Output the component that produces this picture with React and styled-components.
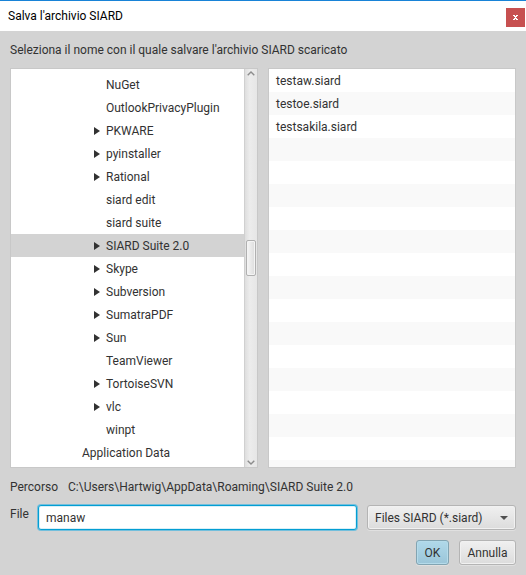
import React, { useState } from "react";
import styled, { createGlobalStyle } from "styled-components";

const GlobalStyle = createGlobalStyle`
  *, *::before, *::after { box-sizing: border-box; }
  body { margin: 0; background: #d3d3d3; }
  body, button, input, select {
    font-family: Roboto, "Open Sans", sans-serif;
    font-size: 12px;
    line-height: 18px;
    color: #323232;
  }
`;

const Dialog = styled.main`
  display: flex;
  flex-direction: column;
  min-height: 100vh;
  border-top: 1px solid #1883d7;
`;

const TitleBar = styled.header`
  display: flex;
  align-items: center;
  justify-content: space-between;
  height: 30px;
  padding: 3px 1px 0 8px;
  background: #fff;
`;

const Title = styled.h1`
  margin: 0;
  padding-bottom: 3px;
  font-size: 12px;
  font-weight: 400;
  color: #000;
`;

const CloseButton = styled.button`
  display: flex;
  align-items: center;
  justify-content: center;
  width: 19px;
  height: 19px;
  padding: 0;
  border: 0;
  background: #c75050;
`;

const Content = styled.form`
  display: flex;
  flex-direction: column;
  gap: 10px;
  padding: 10px;
`;

const Section = styled.section`
  display: flex;
  flex-direction: column;
  gap: 9px;
`;

const Text = styled.p`
  margin: 0;
`;

const Panels = styled.div`
  display: grid;
  grid-template-columns: 1fr 1fr;
  gap: 10px;
`;

const Panel = styled.div`
  display: flex;
  min-width: 0;
  border: 1px solid #c8c8c8;
  background: #fff;
`;

const Tree = styled.ul`
  flex: 1;
  min-width: 0;
  margin: 0;
  padding: 4px 0 3px;
  list-style: none;
`;

const TreeRow = styled.li`
  display: flex;
  align-items: center;
  gap: 6px;
  height: 23px;
  padding-left: ${(p) => (p.$level === 2 ? 83 : 59)}px;
  background: ${(p) => (p.$selected ? "#d3d3d3" : "transparent")};
  white-space: nowrap;
`;

const Disclosure = styled.svg`
  width: 6px;
  height: 8px;
  fill: #323232;
`;

const ScrollBar = styled.div`
  display: flex;
  flex-direction: column;
  align-items: center;
  width: 13px;
  border-left: 1px solid #d0d0d0;
  background: linear-gradient(to right, #dedede, #ececec 40%, #e6e6e6);
`;

const ScrollButton = styled.button`
  display: flex;
  justify-content: center;
  align-items: center;
  width: 12px;
  height: 9px;
  padding: 0;
  border: 0;
  background: transparent;
`;

const ScrollSpace = styled.div`
  flex: ${(p) => p.$part} 0 0;
`;

const Thumb = styled.div`
  width: 10px;
  height: 36px;
  border: 1px solid #b0b0b0;
  border-radius: 2px;
  background: linear-gradient(to right, #f6f6f6, #dcdcdc);
  box-shadow: inset 0 0 0 1px #f4f4f4;
`;

const FileList = styled.ul`
  flex: 1;
  margin: 0;
  padding: 0;
  list-style: none;
  background: repeating-linear-gradient(#fff 0 23px, #f9f9f9 23px 46px);
`;

const FileRow = styled.li`
  display: flex;
  align-items: center;
  height: 23px;
  padding: 0 7px;
`;

const PathRow = styled.div`
  display: flex;
  gap: 10px;
`;

const Fields = styled.div`
  display: flex;
  align-items: stretch;
  gap: 10px;
`;

const FileLabel = styled.label`
  width: 18px;
  white-space: nowrap;
`;

const FileInput = styled.input`
  flex: 1;
  min-width: 0;
  height: 25px;
  padding: 0 7px;
  border: 1px solid #039ed3;
  border-radius: 3px;
  outline: 0;
  background: #fff;
  box-shadow: 0 0 0 1px #73bfdc, inset 0 0 0 1px #d9f0f8;
`;

const Combo = styled.div`
  display: grid;
  align-items: center;
  width: 149px;
`;

const FilterSelect = styled.select`
  grid-area: 1 / 1;
  width: 100%;
  height: 25px;
  padding: 0 24px 0 7px;
  appearance: none;
  border: 1px solid #b4b4b4;
  border-radius: 3px;
  background: linear-gradient(#f0f0f0, #dcdcdc);
  box-shadow: inset 0 0 0 1px #f1f1f1, 0 1px 0 #e0e0e0;
`;

const ComboArrow = styled.svg`
  grid-area: 1 / 1;
  justify-self: end;
  width: 8px;
  height: 4px;
  margin-right: 8px;
  fill: #505050;
  pointer-events: none;
`;

const Actions = styled.footer`
  display: flex;
  justify-content: flex-end;
  gap: 10px;
`;

const ActionButton = styled.button`
  min-width: ${(p) => (p.$primary ? 33 : 57)}px;
  height: 25px;
  padding: 0 7px;
  border: 1px solid ${(p) => (p.$primary ? "#82a4b2" : "#b4b4b4")};
  border-radius: 3px;
  background: ${(p) =>
    p.$primary
      ? "linear-gradient(#b0d9ea, #9bc5d8)"
      : "linear-gradient(#f0f0f0, #dcdcdc)"};
  box-shadow: inset 0 0 0 1px ${(p) => (p.$primary ? "#b5dbea" : "#f1f1f1")},
    0 1px 0 #e0e0e0;
`;

const folders = [
  { name: "NuGet" },
  { name: "OutlookPrivacyPlugin" },
  { name: "PKWARE", parent: true },
  { name: "pyinstaller", parent: true },
  { name: "Rational", parent: true },
  { name: "siard edit" },
  { name: "siard suite" },
  { name: "SIARD Suite 2.0", parent: true, selected: true },
  { name: "Skype", parent: true },
  { name: "Subversion", parent: true },
  { name: "SumatraPDF", parent: true },
  { name: "Sun", parent: true },
  { name: "TeamViewer" },
  { name: "TortoiseSVN", parent: true },
  { name: "vlc", parent: true },
  { name: "winpt" },
  { name: "Application Data", level: 1 },
];

const files = ["testaw.siard", "testoe.siard", "testsakila.siard"];

function Chevron({ up }) {
  return (
    <svg width="8" height="5" viewBox="0 0 8 5" fill="none" stroke="#8c8c8c" strokeWidth="1.4">
      <path d={up ? "M.7 4.2 4 1l3.3 3.2" : "M.7.8 4 4 7.3.8"} />
    </svg>
  );
}

export default function App() {
  const [fileName, setFileName] = useState("manaw");

  return (
    <Dialog>
      <GlobalStyle />
      <TitleBar>
        <Title>Salva l'archivio SIARD</Title>
        <CloseButton type="button" aria-label="Chiudi">
          <svg width="5" height="5" viewBox="0 0 5 5" fill="#fff" shapeRendering="crispEdges">
            <path d="M0 0h2v1h1V0h2v1H4v1H3v1h1v1h1v1H3V4H2v1H0V4h1V3h1V2H1V1H0z" />
          </svg>
        </CloseButton>
      </TitleBar>
      <Content onSubmit={(e) => e.preventDefault()}>
        <Section>
          <Text>Seleziona il nome con il quale salvare l'archivio SIARD scaricato</Text>
          <Panels>
            <Panel>
              <Tree role="tree" aria-label="Cartelle">
                {folders.map((f) => (
                  <TreeRow
                    key={f.name}
                    role="treeitem"
                    aria-selected={Boolean(f.selected)}
                    $level={f.level ?? 2}
                    $selected={f.selected}
                  >
                    <Disclosure viewBox="0 0 6 8" aria-hidden="true">
                      {f.parent && <path d="M0 0 6 4 0 8z" />}
                    </Disclosure>
                    {f.name}
                  </TreeRow>
                ))}
              </Tree>
              <ScrollBar>
                <ScrollButton type="button" aria-label="Scorri su"><Chevron up /></ScrollButton>
                <ScrollSpace $part={47} />
                <Thumb />
                <ScrollSpace $part={53} />
                <ScrollButton type="button" aria-label="Scorri giù"><Chevron /></ScrollButton>
              </ScrollBar>
            </Panel>
            <Panel>
              <FileList aria-label="File">
                {files.map((name) => (
                  <FileRow key={name}>{name}</FileRow>
                ))}
              </FileList>
            </Panel>
          </Panels>
        </Section>
        <Section>
          <PathRow>
            <Text>Percorso</Text>
            <Text>C:\Users\Hartwig\AppData\Roaming\SIARD Suite 2.0</Text>
          </PathRow>
          <Fields>
            <FileLabel htmlFor="file-name">File</FileLabel>
            <FileInput
              id="file-name"
              value={fileName}
              onChange={(e) => setFileName(e.target.value)}
            />
            <Combo>
              <FilterSelect aria-label="Tipo di file">
                <option>Files SIARD (*.siard)</option>
              </FilterSelect>
              <ComboArrow viewBox="0 0 8 4" aria-hidden="true">
                <path d="M0 0h8L4 4z" />
              </ComboArrow>
            </Combo>
          </Fields>
        </Section>
        <Actions>
          <ActionButton type="submit" $primary>OK</ActionButton>
          <ActionButton type="button">Annulla</ActionButton>
        </Actions>
      </Content>
    </Dialog>
  );
}
